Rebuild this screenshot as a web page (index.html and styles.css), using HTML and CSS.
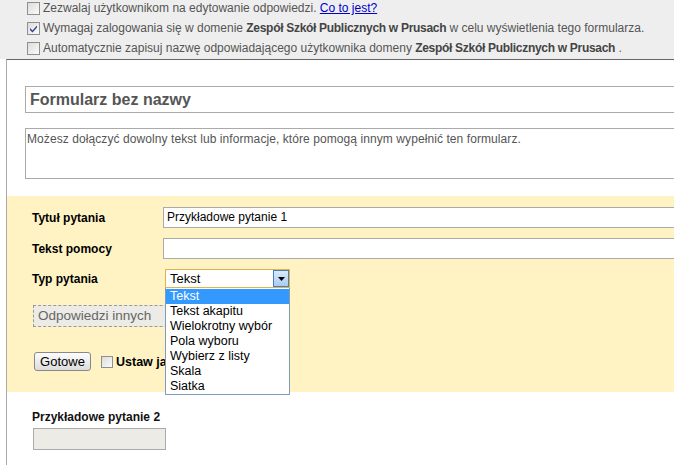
FILE: index.html
```html
<!DOCTYPE html>
<html lang="pl">
  <head>
    <meta charset="UTF-8" />
    <meta name="viewport" content="width=device-width, initial-scale=1.0" />
    <title>Formularz bez nazwy</title>
    <link rel="stylesheet" href="styles.css">
  </head>
  <body>
    <div class="settings">
      <div class="opt">
        <span class="cb"></span>
        Zezwalaj użytkownikom na edytowanie odpowiedzi.&nbsp;<a href="#">Co to jest?</a>
      </div>
      <div class="opt">
        <span class="cb">
          <svg width="11" height="11" viewBox="0 0 11 11"><path d="M2 5 L4.5 7.5 L9 2.5 L9 4.5 L4.5 9.5 L2 7 Z" fill="#2b3f8f"/></svg>
        </span>
        Wymagaj zalogowania się w domenie&nbsp;<b>Zespół Szkół Publicznych w Prusach</b>&nbsp;w celu wyświetlenia tego formularza.
      </div>
      <div class="opt">
        <span class="cb"></span>
        Automatycznie zapisuj nazwę odpowiadającego użytkownika domeny&nbsp;<b>Zespół Szkół Publicznych w Prusach</b>&nbsp;.
      </div>
    </div>

    <div class="form">
      <div class="form-head">
        <div class="title-box">Formularz bez nazwy</div>
        <div class="desc-box">Możesz dołączyć dowolny tekst lub informacje, które pomogą innym wypełnić ten formularz.</div>
      </div>

      <div class="question editing">
        <div class="row">
          <label>Tytuł pytania</label>
          <div class="field">Przykładowe pytanie 1</div>
        </div>
        <div class="row">
          <label>Tekst pomocy</label>
          <div class="field"></div>
        </div>
        <div class="row">
          <label>Typ pytania</label>
          <div class="select-wrap">
            <div class="select">
              Tekst
              <span class="arrow">
                <svg width="7" height="4" viewBox="0 0 7 4"><path d="M0 0 H7 L3.5 4 Z" fill="#000"/></svg>
              </span>
            </div>
            <ul class="options">
              <li class="active">Tekst</li>
              <li>Tekst akapitu</li>
              <li>Wielokrotny wybór</li>
              <li>Pola wyboru</li>
              <li>Wybierz z listy</li>
              <li>Skala</li>
              <li>Siatka</li>
            </ul>
          </div>
        </div>
        <div class="preview">Odpowiedzi innych</div>
        <div class="actions">
          <button class="done-button">Gotowe</button>
          <span class="cb"></span>
          <b>Ustaw jako wymagane</b>
        </div>
      </div>

      <div class="question">
        <div class="q-title">Przykładowe pytanie 2</div>
        <div class="answer"></div>
      </div>
    </div>
  </body>
</html>
```

FILE: styles.css
```css
html,
body {
  overflow: hidden;
}

body {
  font-family: "Liberation Sans", Arial, sans-serif;
  font-size: 13px;
  background-color: #fff;
  margin: 0;
  padding: 0;
  width: 780px;
}

.settings {
  background-color: #eeeeee;
  margin-top: -2px;
  height: 61px;
  padding-left: 27px;
  color: #555;
  font-size: 12px;
}

.opt {
  display: flex;
  align-items: center;
  height: 20px;
  white-space: nowrap;
}

.opt b {
  color: #444;
  letter-spacing: -0.3px;
}

.opt a {
  color: #0000cc;
}

.cb {
  display: inline-flex;
  align-items: center;
  justify-content: center;
  box-sizing: border-box;
  width: 13px;
  height: 13px;
  margin-right: 3px;
  border: 1px solid #8f8f8f;
  background: linear-gradient(135deg, #dcdcd8, #fbfbfb);
  flex-shrink: 0;
}

.form {
  margin-left: 6px;
  border-left: 1px solid #aaa;
  border-top: 1px solid #666;
  min-height: 420px;
}

.form-head {
  padding: 26px 0 17px 18px;
}

.title-box {
  box-sizing: border-box;
  height: 27px;
  border: 1px solid #aaa;
  padding-left: 4px;
  font-size: 16px;
  font-weight: bold;
  line-height: 25px;
  color: #555;
}

.desc-box {
  box-sizing: border-box;
  height: 51px;
  margin-top: 15px;
  border: 1px solid #aaa;
  padding: 3px 0 0 1px;
  font-size: 12px;
  letter-spacing: 0.08px;
  line-height: 15px;
  color: #555;
}

.question {
  padding: 18px 0 20px 25px;
}

.question.editing {
  background-color: #fff3c4;
  padding-top: 11px;
  padding-bottom: 21px;
}

.row {
  display: flex;
  align-items: center;
  margin-bottom: 10px;
}

.row label {
  width: 131px;
  font-size: 12px;
  font-weight: bold;
  color: #000;
}

.field {
  flex: 1;
  box-sizing: border-box;
  height: 21px;
  border: 1px solid #aaa;
  background-color: #fff;
  padding-left: 3px;
  line-height: 19px;
  font-size: 12px;
  color: #000;
}

.select-wrap {
  position: relative;
  margin-left: 2px;
}

.select {
  box-sizing: border-box;
  width: 125px;
  height: 19px;
  border: 1px solid #e2b24f;
  background-color: #fff;
  padding-left: 4px;
  line-height: 17px;
  display: flex;
  justify-content: space-between;
}

.arrow {
  box-sizing: border-box;
  width: 16px;
  height: 17px;
  border: 1px solid #4a7cc0;
  background: linear-gradient(#d8eafc, #a9cbf2);
  display: flex;
  align-items: center;
  justify-content: center;
}

.options {
  position: absolute;
  top: 19px;
  left: 0;
  box-sizing: border-box;
  width: 125px;
  margin: 0;
  padding: 1px 0 0;
  list-style: none;
  background-color: #fff;
  border: 1px solid #7f9db9;
  border-top: none;
  z-index: 2;
}

.options li {
  height: 15px;
  line-height: 15px;
  padding-left: 4px;
  font-size: 12.5px;
  color: #000;
}

.options li.active {
  background-color: #3399ff;
  color: #fff;
}

.preview {
  box-sizing: border-box;
  width: 160px;
  height: 22px;
  margin: 17px 0 0 1px;
  border: 1px dashed #999;
  background-color: #ecebe5;
  padding-left: 4px;
  line-height: 20px;
  font-size: 13.5px;
  color: #666;
}

.actions {
  display: flex;
  align-items: center;
  margin: 25px 0 0 2px;
  font-size: 12.5px;
  white-space: nowrap;
}

.done-button {
  box-sizing: border-box;
  height: 19px;
  width: 57px;
  padding: 0;
  margin-right: 10px;
  border: 1px solid #888;
  border-radius: 3px;
  background: linear-gradient(#fdfdfd, #dcdcdc);
  font-family: inherit;
  font-size: 13px;
  color: #000;
}

.actions .cb {
  width: 12px;
  height: 12px;
}

.q-title {
  font-size: 12px;
  font-weight: bold;
  line-height: 15px;
  color: #111;
}

.answer {
  box-sizing: border-box;
  width: 133px;
  height: 22px;
  margin: 3px 0 0 1px;
  border: 1px solid #aaa;
  background-color: #ecebe5;
}
```
